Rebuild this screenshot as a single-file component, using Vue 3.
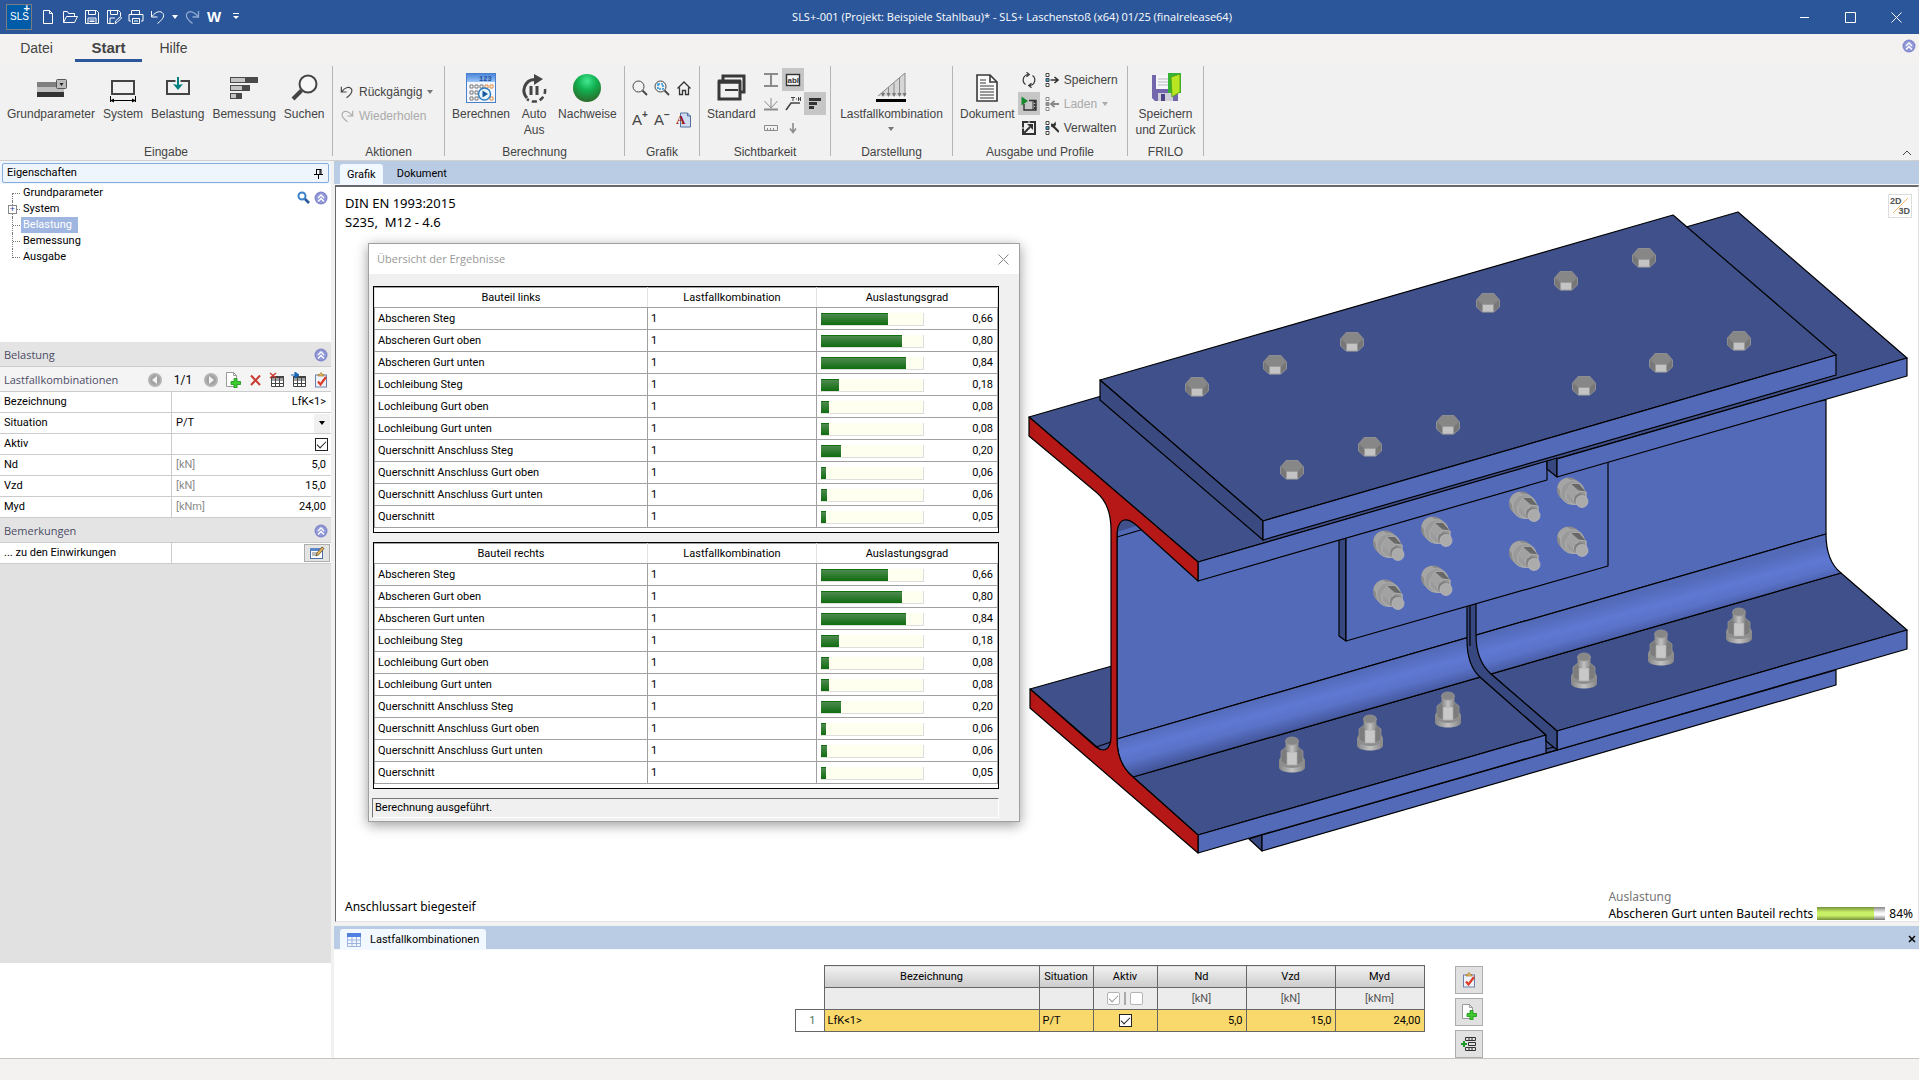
<script setup>
import { ref } from 'vue'

const quick = ['new', 'open', 'save', 'saveas', 'print', 'undo']
const tree = ['Grundparameter', 'System', 'Belastung', 'Bemessung', 'Ausgabe']

const results = [
  ['Abscheren Steg', '0,66', 67],
  ['Abscheren Gurt oben', '0,80', 81],
  ['Abscheren Gurt unten', '0,84', 85],
  ['Lochleibung Steg', '0,18', 18],
  ['Lochleibung Gurt oben', '0,08', 8],
  ['Lochleibung Gurt unten', '0,08', 8],
  ['Querschnitt Anschluss Steg', '0,20', 20],
  ['Querschnitt Anschluss Gurt oben', '0,06', 5],
  ['Querschnitt Anschluss Gurt unten', '0,06', 6],
  ['Querschnitt', '0,05', 5]
]
const parts = ['Bauteil links', 'Bauteil rechts']

const name = ref('LfK<1>')
const situation = ref('P/T')
const active = ref(true)
const loads = ref([
  { id: 'nd', label: 'Nd', unit: '[kN]', value: '5,0' },
  { id: 'vzd', label: 'Vzd', unit: '[kN]', value: '15,0' },
  { id: 'myd', label: 'Myd', unit: '[kNm]', value: '24,00' }
])

const headBolts = [
  [1197, 387], [1275, 365], [1352, 342], [1488, 303], [1566, 281], [1644, 258],
  [1292, 470], [1370, 447], [1448, 425], [1584, 386], [1661, 363], [1739, 341]
]
const webBolts = [
  [1389, 546], [1437, 532], [1525, 507], [1573, 493],
  [1389, 595], [1437, 581], [1525, 556], [1573, 542]
]
const footBolts = [
  [1292, 755], [1370, 733], [1448, 710], [1584, 671], [1661, 648], [1739, 626]
]
</script>

<template>
  <div class="app">
    <svg class="defs" aria-hidden="true">
      <defs>
        <linearGradient id="fillet" gradientUnits="userSpaceOnUse" x1="1300" y1="686" x2="1311" y2="726">
          <stop offset="0" stop-color="#536ab8" />
          <stop offset=".4" stop-color="#5f78d2" />
          <stop offset=".65" stop-color="#5a72c8" />
          <stop offset="1" stop-color="#43569a" />
        </linearGradient>
        <linearGradient id="cyl" x1="0" x2="1">
          <stop offset="0" stop-color="#858585" />
          <stop offset=".5" stop-color="#c2c2c2" />
          <stop offset="1" stop-color="#858585" />
        </linearGradient>
        <radialGradient id="ball" cx=".5" cy=".25" r=".75">
          <stop offset="0" stop-color="#41e892" />
          <stop offset=".45" stop-color="#12b050" />
          <stop offset="1" stop-color="#2c6a2a" />
        </radialGradient>
        <linearGradient id="calc" x1="0" y1="0" x2="0" y2="1">
          <stop offset="0" stop-color="#4c86dc" />
          <stop offset="1" stop-color="#9cc4f6" />
        </linearGradient>
        <symbol id="collapse" viewBox="0 0 14 14">
          <circle cx="7" cy="7" r="6.500" fill="#8389cc" />
          <circle cx="7" cy="7" r="5" fill="#939bd8" />
          <path d="M4 7l3-3 3 3M4 10.500l3-3 3 3" fill="none" stroke="#fff" stroke-width="1.300" />
        </symbol>
        <symbol id="clip" viewBox="0 0 16 16">
          <rect x="2.500" y="3" width="11" height="12" fill="#eef2fb" stroke="#6f80a8" />
          <path d="M5 4V2.500h1.500L8 .5l1.500 2H11V4z" fill="#e3b765" stroke="#a5762c" stroke-width=".7" />
          <path d="M5 9.500l2.500 3L13 5" fill="none" stroke="#dd3b24" stroke-width="2.200" />
        </symbol>
        <symbol id="adddoc" viewBox="0 0 16 16">
          <path d="M1.500.5h7l3 3v11h-10z" fill="#fff" stroke="#9a9a9a" />
          <path d="M8.500.5v3h3" fill="none" stroke="#9a9a9a" />
          <path d="M9 6.500h3v3h3.500v3H12V16H9v-3.500H6v-3h3z" fill="#3ecb2f" stroke="#1b8f16" stroke-width=".8" />
        </symbol>
        <symbol id="undo" viewBox="0 0 16 16">
          <path d="M1.500 2v6h6M2 7.500C6 2 11 1.500 13 4.500s-1 6.500-5.500 10" fill="none" stroke="currentColor" stroke-width="1.300" />
        </symbol>
        <symbol id="redo" viewBox="0 0 16 16">
          <path d="M14.500 2v6h-6M14 7.500C10 2 5 1.500 3 4.500s1 6.500 5.500 10" fill="none" stroke="currentColor" stroke-width="1.300" />
        </symbol>
        <symbol id="hexhead" viewBox="-12 -10 24 20">
          <path d="M-11.500-3L-6-9.500H6L11.500-3V4L6 9H-6L-11.500 4z" fill="#777" stroke="#999" stroke-width=".8" />
          <path d="M-11-3L-6-9H6L11-3 6 1.500H-6z" fill="#878787" />
          <path d="M-5.500 1.500h11V9h-11z" fill="#c4c4c4" stroke="#999" stroke-width=".8" />
        </symbol>
        <symbol id="nutweb" viewBox="-16 -16 32 32">
          <circle cx="-4" cy="-3.500" r="12" fill="#8b8b8b" />
          <path d="M-15.500-6A12 12 0 0 1 -6-15.300L-2-12.500A12 12 0 0 0 -12-1z" fill="#a4a4a4" />
          <circle cx="-.5" cy="-.5" r="12" fill="#9a9a9a" stroke="#b5b5b5" stroke-width=".7" />
          <path d="M-7-1L-2-9 6-9 13-1V7L7 12-1 11-7 6z" fill="#9b9b9b" stroke="#b8b8b8" stroke-width=".8" />
          <path d="M-2-9L6-9 13-1 6-2z" fill="#686868" />
          <path d="M-7-1L-2-9 6-2 0 6z" fill="#a2a2a2" />
          <path d="M6-2l7 1v8l-6 5-7-6z" fill="#959595" stroke="#b8b8b8" stroke-width=".8" />
          <circle cx="7" cy="6.500" r="6" fill="#808080" />
          <circle cx="9" cy="8.500" r="6" fill="#ababab" stroke="#bdbdbd" stroke-width=".7" />
        </symbol>
        <symbol id="nutfoot" viewBox="-14 -19 28 38">
          <path d="M-13 5h26v8c-2 6-24 6-26 0z" fill="url(#cyl)" />
          <ellipse cx="0" cy="6" rx="13" ry="7" fill="#8d8d8d" />
          <path d="M-11-4l5-4H6l5 4V7L5 10H-5l-6-3z" fill="#7c7c7c" stroke="#999" stroke-width=".7" />
          <path d="M-5-3H5V10H-5z" fill="#c8c8c8" stroke="#aaa" stroke-width=".7" />
          <path d="M-6.500-14h13v9c-3 3-10 3-13 0z" fill="url(#cyl)" />
          <ellipse cx="0" cy="-14" rx="6.500" ry="4" fill="#878787" stroke="#9a9a9a" stroke-width=".7" />
        </symbol>
        <symbol id="list" viewBox="0 0 14 14">
          <path d="M1 .5h3v3H1zM1 10.500h3v3H1z" fill="#fff" stroke="currentColor" />
          <path d="M1 5.500h3v3H1z" fill="#38a5e0" stroke="currentColor" />
        </symbol>
      </defs>
    </svg>

    <header class="titlebar">
      <span class="logo"><b>SLS</b><i>+</i></span>
      <nav class="quick">
        <button v-for="q in quick" :key="q" :aria-label="q">
          <svg viewBox="0 0 16 16" width="16" height="16" fill="none" stroke="#fff">
            <path v-if="q === 'new'" d="M3.500 1.500h6l3 3v10h-9zM9.500 1.500v3h3" />
            <path v-else-if="q === 'open'" d="M1.500 13.500v-11h4l1 2h6v3M1.500 13.500l3-6h11l-3 6z" />
            <path v-else-if="q === 'save'" d="M1.500 1.500h11l2 2v11h-13zM4.500 1.500v4h7v-4M4 14v-5h8v5M5.500 11h5M5.500 12.500h5" />
            <path v-else-if="q === 'saveas'" d="M8 14.500H1.500v-13h11l2 2V7M4.500 1.500v4h7v-4M4 14V9h5M9 14.500l1-3 4.500-4 1 1.500-4.500 4.500z" />
            <path v-else-if="q === 'print'" d="M3.500 5.500v-4h8v4M3 12H1V5.500h14V12h-2M4.500 9.500h7v5h-7zM6 12h4" />
            <path v-else d="M1.500 2v6h6M2 7.500C6 2 11 1.500 13 4.500s-1 6.500-5.500 10" />
          </svg>
        </button>
        <button class="slim" aria-label="Liste"><svg viewBox="0 0 6 4" width="6" height="4"><path d="M0 0h6L3 4z" fill="#fff" /></svg></button>
        <button class="faded" aria-label="Wiederholen"><svg width="16" height="16"><use href="#redo" /></svg></button>
        <button class="word" aria-label="Word">W</button>
        <button aria-label="Anpassen"><svg viewBox="0 0 8 8" width="8" height="8"><path d="M1 .5h6" stroke="#fff" /><path d="M1 3h6L4 6z" fill="#fff" /></svg></button>
      </nav>
      <h1>SLS+-001 (Projekt: Beispiele Stahlbau)* - SLS+ Laschenstoß (x64) 01/25 (finalrelease64)</h1>
      <div class="winbtns">
        <button aria-label="Minimieren"><svg viewBox="0 0 11 11" width="11" height="11"><path d="M1 5.500h9" stroke="#fff" /></svg></button>
        <button aria-label="Maximieren"><svg viewBox="0 0 11 11" width="11" height="11"><path d="M.5.5h10v10H.5z" stroke="#fff" fill="none" /></svg></button>
        <button aria-label="Schließen"><svg viewBox="0 0 11 11" width="11" height="11"><path d="M.5.5l10 10M10.500.5l-10 10" stroke="#fff" /></svg></button>
      </div>
    </header>

    <nav class="menutabs">
      <button>Datei</button>
      <button class="on">Start</button>
      <button>Hilfe</button>
      <svg class="help" width="14" height="14"><use href="#collapse" /></svg>
    </nav>

    <section class="ribbon">
      <div class="group g1">
        <div class="items">
          <button class="big">
            <svg viewBox="0 0 32 32" width="32" height="32"><path d="M2 10h27v5H2z" fill="#808080" /><path d="M2 15h27v5H2z" fill="#bfbfbf" /><path d="M2 20h27v5H2z" fill="#333" /><rect x="21.500" y="7.500" width="10" height="9" rx="1" fill="#bbb" stroke="#555" /><path d="M24.500 11h4l-2 3z" fill="#222" /></svg>
            Grundparameter
          </button>
          <button class="big">
            <svg viewBox="0 0 32 32" width="32" height="32"><path d="M5 9h22v13H5z" fill="#f1f1f1" stroke="#444" stroke-width="2" /><path d="M3.500 24v6M28.500 24v6M4 28.500h24" stroke="#000" fill="none" /><path d="M3 28.500l4-2v4zM29 28.500l-4-2v4z" /></svg>
            System
          </button>
          <button class="big">
            <svg viewBox="0 0 32 32" width="32" height="32"><path d="M5 9h22v13H5z" fill="#f1f1f1" stroke="#444" stroke-width="2" /><path d="M16 4v10" stroke="#f1f1f1" stroke-width="5" /><path d="M16 5v11" stroke="#008080" stroke-width="2" /><path d="M11 12l5 1 5-1-5 6z" fill="#008080" /></svg>
            Belastung
          </button>
          <button class="big">
            <svg viewBox="0 0 32 32" width="32" height="32"><path d="M2 5h28v6H2zM2 13h20v6H2zM2 21h12v6H2z" fill="#4a4a4a" /><path d="M3 6h14v4H3zM3 14h11v4H3zM3 22h5v4H3z" fill="#c4c4c4" /></svg>
            Bemessung
          </button>
          <button class="big">
            <svg viewBox="0 0 32 32" width="32" height="32"><circle cx="20" cy="12" r="8.500" fill="#f7f7f7" stroke="#444" stroke-width="2" /><path d="M13.500 18.500L5 27" stroke="#444" stroke-width="4" /></svg>
            Suchen
          </button>
        </div>
        <h2>Eingabe</h2>
      </div>
      <div class="group g2">
        <div class="items stack">
          <button class="row"><svg width="14" height="14"><use href="#undo" /></svg>Rückgängig <svg class="tri" viewBox="0 0 6 4" width="6" height="4"><path d="M0 0h6L3 4z" fill="#777" /></svg></button>
          <button class="row" disabled><svg width="14" height="14"><use href="#redo" /></svg>Wiederholen</button>
        </div>
        <h2>Aktionen</h2>
      </div>
      <div class="group g3">
        <div class="items">
          <button class="big">
            <svg viewBox="0 0 32 32" width="32" height="32"><rect x="1.500" y="1.500" width="29" height="29" fill="#f3f7fd" stroke="#4a7fcb" /><path d="M2 2h28v8H2z" fill="url(#calc)" /><g font-size="7" font-weight="bold" fill="#234d94" font-family="Liberation Mono"><text x="14" y="8.500">123</text></g><path d="M5 13h3v3H5zM10 13h3v3h-3zM15 13h3v3h-3zM5 19h3v3H5zM10 19h3v3h-3zM5 25h3v3H5zM10 25h3v3h-3z" fill="#fff" stroke="#777" /><path d="M20 13h3v3h-3zM25 13h3v3h-3zM25 25h3v3h-3z" fill="#fff" stroke="#e08a3c" /><circle cx="19.500" cy="22" r="6" fill="#e9f4fd" stroke="#2f7fc4" stroke-width="1.500" /><path d="M17.500 18.500v7l5.500-3.500z" fill="#15599f" /></svg>
            Berechnen
          </button>
          <button class="big">
            <svg viewBox="0 0 32 32" width="32" height="32" fill="none" stroke="#444"><path d="M9 26A11 11 0 0 1 16 7.500" stroke-width="3" /><path d="M16 2l9 5-9 6z" fill="#444" stroke="none" /><path d="M13 14v9M19 14v9" stroke-width="3" /><path d="M27 17a11 11 0 0 1-18 10" stroke-width="2.500" stroke-dasharray="5 3" /></svg>
            Auto<br>Aus
          </button>
          <button class="big">
            <svg viewBox="0 0 32 32" width="32" height="32"><circle cx="16" cy="16" r="14" fill="url(#ball)" /></svg>
            Nachweise
          </button>
        </div>
        <h2>Berechnung</h2>
      </div>
      <div class="group g4">
        <div class="items grid">
          <button aria-label="Lupe"><svg viewBox="0 0 16 16" width="16" height="16" fill="none" stroke="#444"><circle cx="6.500" cy="6.500" r="5.500" /><path d="M10.500 10.500l4.500 4.500" stroke-width="1.800" /></svg></button>
          <button aria-label="Zoom Fenster"><svg viewBox="0 0 16 16" width="16" height="16" fill="none" stroke="#444"><circle cx="6.500" cy="6.500" r="5.500" /><path d="M10.500 10.500l4.500 4.500" stroke-width="1.800" /><path d="M4 4h5v5H4z" stroke="#2b96d8" stroke-width="1.600" stroke-dasharray="2 1" /></svg></button>
          <button aria-label="Alles"><svg viewBox="0 0 16 16" width="16" height="16" fill="none" stroke="#333" stroke-width="1.300"><path d="M1.500 8.500L8 2l6.500 6.500M3.500 7.500v7h3v-4h3v4h3v-7" /></svg></button>
          <button class="letter">A<sup>+</sup></button>
          <button class="letter">A<sup>−</sup></button>
          <button aria-label="Schrift"><svg viewBox="0 0 16 16" width="16" height="16"><path d="M4.500 1h7l3 3v11h-10z" fill="#cfdcf0" stroke="#54709e" /><path d="M11.500 1v3h3" fill="#9db6da" stroke="#54709e" /><text x="0" y="12" font-size="13" font-weight="bold" fill="#a01010" font-family="Liberation Serif">A</text></svg></button>
        </div>
        <h2>Grafik</h2>
      </div>
      <div class="group g5">
        <div class="items">
          <button class="big">
            <svg viewBox="0 0 32 32" width="32" height="32" fill="none" stroke="#383838"><path d="M8 4h21v16H8z" stroke-width="3" /><path d="M4 10h21v17H4z" fill="#f1f1f1" stroke-width="3" /><path d="M10 18h13" stroke-width="2" /><path d="M3 9.500h23" stroke-width="4" /></svg>
            Standard
          </button>
          <div class="minis">
            <button aria-label="Profil"><svg viewBox="0 0 16 16" width="16" height="16" fill="none" stroke="#8b8b8b" stroke-width="2"><path d="M1 2h14M1 14h14M8 2v12" /></svg></button>
            <button class="sel" aria-label="Text"><svg viewBox="0 0 16 16" width="16" height="16"><rect x="1.500" y="2.500" width="13" height="11" fill="#f4f4f4" stroke="#333" stroke-width="1.400" /><text x="2.500" y="11" font-size="8" font-weight="bold" fill="#333" font-family="Liberation Sans">abl</text></svg></button>
            <i></i>
            <button aria-label="Knoten"><svg viewBox="0 0 16 16" width="16" height="16" fill="none" stroke="#8b8b8b"><path d="M1 13.500h14" stroke-width="2" /><path d="M8 2v10M8 12L1.500 5M8 12l6.500-7" /></svg></button>
            <button aria-label="Beschriftung"><svg viewBox="0 0 16 16" width="16" height="16" fill="none" stroke="#444"><path d="M1 14l5-7h9" stroke-width="1.600" /><path d="M6 1.500h4M8 1.500V5M11 3h1M13.500 1v4M15.500 1v4M13.500 3h2" /></svg></button>
            <button class="sel" aria-label="Ergebnisse"><svg viewBox="0 0 16 16" width="16" height="16" fill="#333"><path d="M2 2h12v3H2zM2 6h8v3H2zM2 10h5v3H2z" /></svg></button>
            <button aria-label="Maß"><svg viewBox="0 0 16 16" width="16" height="16" fill="none" stroke="#8b8b8b"><path d="M1.500 5.500h13v5h-13zM4.500 10V8M7.500 10V8M10.500 10V8" /></svg></button>
            <button aria-label="Lasten"><svg viewBox="0 0 16 16" width="16" height="16" fill="none" stroke="#8b8b8b" stroke-width="1.600"><path d="M8 3v9M5 8.500l3 4 3-4" /></svg></button>
            <i></i>
          </div>
        </div>
        <h2>Sichtbarkeit</h2>
      </div>
      <div class="group g6">
        <div class="items">
          <button class="big">
            <svg viewBox="0 0 32 32" width="32" height="32"><path d="M3 24L30 1v23z" fill="#d6d6d6" /><path d="M3 24L30 1v23M24.500 6v18M19 11v13M13.500 15v9M8 20v4" fill="none" stroke="#8a8a8a" /><path d="M6 21h4l-2 4zM11.500 21h4l-2 4zM17 21h4l-2 4zM22.500 21h4l-2 4zM27.500 21h4l-2 4z" fill="#777" /><path d="M1 27h30v3H1z" /></svg>
            Lastfallkombination
            <svg class="tri" viewBox="0 0 6 4" width="6" height="4"><path d="M0 0h6L3 4z" fill="#777" /></svg>
          </button>
        </div>
        <h2>Darstellung</h2>
      </div>
      <div class="group g7">
        <div class="items">
          <button class="big">
            <svg viewBox="0 0 32 32" width="32" height="32" fill="none" stroke="#383838"><path d="M6 3h13l7 7v19H6z" fill="#fafafa" stroke-width="1.600" /><path d="M19 3v7h7" stroke-width="1.600" /><path d="M9 8h6M9 11h6M9 14h14M9 17h14M9 20h14M9 23h14M9 26h14" /></svg>
            Dokument
          </button>
          <div class="minicol">
            <button aria-label="Aktualisieren"><svg viewBox="0 0 16 16" width="16" height="16" fill="none" stroke="#333" stroke-width="1.200"><path d="M7 2.500C1.500 3.500.8 10 4.500 12.500M9 13.500C14.500 12.500 15.200 6 11.500 3.500" /><path d="M5.500.3l2.800 2.200L5.500 4.700M10.500 11.300l-2.800 2.200 2.800 2.200" /></svg></button>
            <button class="sel" aria-label="Film"><svg viewBox="0 0 16 16" width="16" height="16"><path d="M3 8v6h12V4.500H8" fill="none" stroke="#333" stroke-width="1.400" /><path d="M12 5v9" stroke="#333" /><path d="M14 5v9" stroke="#333" stroke-dasharray="2 1" stroke-width="2" /><path d="M.5.500v9l6.500-4.500z" fill="#168a2c" /></svg></button>
            <button aria-label="Extern"><svg viewBox="0 0 16 16" width="16" height="16"><path d="M1 1h14v14H1z" fill="#333" /><path d="M3 3h10v10H3z" fill="#f1f1f1" /><path d="M8 1v3M1 8h3" stroke="#f1f1f1" stroke-width="1" /><path d="M3 13l6-6" stroke="#333" stroke-width="2" /><path d="M6 4h6v6z" fill="#333" /></svg></button>
          </div>
          <div class="minicol wide">
            <button class="row"><svg viewBox="0 0 14 14" width="14" height="14"><use href="#list" /><path d="M5.500 7H12M9.500 4l3.500 3-3.500 3" fill="none" stroke="#333" stroke-width="1.600" /></svg>Speichern</button>
            <button class="row" disabled><svg class="dim" viewBox="0 0 14 14" width="14" height="14"><use href="#list" /><path d="M6 7h8M9.500 4L6 7l3.500 3" fill="none" stroke="#888" stroke-width="1.800" /></svg>Laden <svg class="tri" viewBox="0 0 6 4" width="6" height="4"><path d="M0 0h6L3 4z" fill="#aaa" /></svg></button>
            <button class="row"><svg viewBox="0 0 14 14" width="14" height="14"><use href="#list" /><path d="M8 5l6 6" stroke="#333" stroke-width="2.200" /><path d="M6 2.500l2.500.5 2-2.500.5 3L9 7 6 5.500z" fill="#333" /></svg>Verwalten</button>
          </div>
        </div>
        <h2>Ausgabe und Profile</h2>
      </div>
      <div class="group g8">
        <div class="items">
          <button class="big">
            <svg viewBox="0 0 32 32" width="32" height="32"><path d="M2 3h26v26H5l-3-3z" fill="#7466ad" /><path d="M6 3h15v14H6z" fill="#f6f6f8" /><path d="M8 7h11M8 10h11M8 13h11" stroke="#b9b9c5" /><path d="M8 21h15v8H8z" fill="#cfcfd8" /><path d="M11 22h4v7h-4z" fill="#4f4488" /><path d="M18 1h13v20H18z" fill="#35b335" /><path d="M21 5l9-3v18l-8 5z" fill="#b8e620" stroke="#58a51c" /></svg>
            Speichern<br>und Zurück
          </button>
        </div>
        <h2>FRILO</h2>
      </div>
      <button class="fold" aria-label="Menüband reduzieren"><svg viewBox="0 0 10 6" width="10" height="6"><path d="M1 5l4-4 4 4" fill="none" stroke="#444" /></svg></button>
    </section>

    <main>
      <aside>
        <div class="sidehead"><div>Eigenschaften<svg viewBox="0 0 9 11" width="9" height="11"><path d="M2 1.500h5M2.500 1v5M6 1v5M7 1v5M0 6.500h9M4.500 7v4" stroke="#000" fill="none" /></svg></div></div>
        <div class="tree">
          <ul>
            <li v-for="(t, i) in tree" :key="t" :class="{ first: i === 0, last: i === 4 }">
              <span v-if="i === 1" class="plus">+</span>
              <a href="#" :class="{ on: i === 2 }">{{ t }}</a>
            </li>
          </ul>
          <div class="treetools">
            <svg viewBox="0 0 13 13" width="13" height="13" fill="none"><circle cx="5" cy="5" r="3.500" stroke="#3a82cc" stroke-width="2" /><path d="M8 8l4 4" stroke="#26569a" stroke-width="2.500" /></svg>
            <svg width="14" height="14"><use href="#collapse" /></svg>
          </div>
        </div>
        <h3>Belastung<svg width="14" height="14"><use href="#collapse" /></svg></h3>
        <div class="lfk">
          <span class="cap">Lastfallkombinationen</span>
          <button aria-label="Zurück"><svg viewBox="0 0 16 16" width="16" height="16"><circle cx="8" cy="8" r="7" fill="#b3b3b3" /><circle cx="8" cy="8" r="5" fill="#a3a3a3" /><path d="M10 4v8L5 8z" fill="#f4f4f4" /></svg></button>
          <span class="count">1/1</span>
          <button aria-label="Weiter"><svg viewBox="0 0 16 16" width="16" height="16"><circle cx="8" cy="8" r="7" fill="#b3b3b3" /><circle cx="8" cy="8" r="5" fill="#a3a3a3" /><path d="M6 4v8l5-4z" fill="#f4f4f4" /></svg></button>
          <button aria-label="Neu"><svg width="16" height="16"><use href="#adddoc" /></svg></button>
          <button aria-label="Löschen"><svg viewBox="0 0 16 16" width="16" height="16"><path d="M4 3.500l9 9.500M13 3.500L4 13" stroke="#c93a31" stroke-width="2" /></svg></button>
          <button aria-label="Zeile löschen"><svg viewBox="0 0 16 16" width="16" height="16"><path d="M2.500 4.500h12v10h-12zM2 8h13M2 11.500h13M6.500 5v10M10.500 5v10" fill="#fff" stroke="#444" /><path d="M2 4h13v2.500H2z" fill="#444" /><path d="M1 1l6 5M7 1L1 6" stroke="#d0392e" stroke-width="1.500" /></svg></button>
          <button aria-label="Einfügen"><svg viewBox="0 0 16 16" width="16" height="16"><path d="M2.500 4.500h12v10h-12zM2 8h13M2 11.500h13M6.500 5v10M10.500 5v10" fill="#fff" stroke="#444" /><path d="M2 4h13v2.500H2z" fill="#444" /><path d="M0 3h5M4 0l4 3-4 3z" fill="#1466b8" stroke="#1466b8" /></svg></button>
          <button aria-label="Prüfen"><svg width="16" height="16"><use href="#clip" /></svg></button>
        </div>
        <div class="prop"><label for="bez">Bezeichnung</label><div><input id="bez" v-model="name" type="text"></div></div>
        <div class="prop"><label for="sit">Situation</label><div><select id="sit" v-model="situation"><option>P/T</option></select><span class="drop"><svg viewBox="0 0 6 4" width="6" height="4"><path d="M0 0h6L3 4z" /></svg></span></div></div>
        <div class="prop"><label for="akt">Aktiv</label><div class="end"><input id="akt" v-model="active" class="chk" type="checkbox"></div></div>
        <div v-for="l in loads" :key="l.id" class="prop"><label :for="l.id">{{ l.label }}</label><div><span class="unit">{{ l.unit }}</span><input :id="l.id" v-model="l.value" type="text"></div></div>
        <h3>Bemerkungen<svg width="14" height="14"><use href="#collapse" /></svg></h3>
        <div class="prop"><span class="lab">... zu den Einwirkungen</span><div class="end"><button class="edit" aria-label="Bearbeiten"><svg viewBox="0 0 16 14" width="16" height="14"><rect x="1.500" y="2.500" width="12" height="10" fill="#fff" stroke="#4c6fa8" /><path d="M1 2h13v3H1z" fill="#5b86c8" /><path d="M3 7h6M3 9h4" stroke="#777" /><path d="M7 10l1-3 5-6 2 1.500-5 6z" fill="#e9b95a" stroke="#5b4a2c" stroke-width=".8" /></svg></button></div></div>
        <div class="filler"></div>
      </aside>

      <div class="work">
        <nav class="doctabs"><button class="on">Grafik</button><button>Dokument</button></nav>
        <div class="canvas">
          <svg class="model" viewBox="336 187 1582 734" stroke="#000" stroke-width="1.200" stroke-linejoin="round">
            <!-- lower cover plate -->
            <path d="M1249 839L1262 835V851z" fill="#37477f" />
            <path d="M1540 745L1562 730V752L1540 758z" fill="#3f508a" stroke="none" />
            <path d="M1262 835L1836 670V685L1262 851z" fill="#536ab8" />
            <!-- lower flange -->
            <path d="M1030 689L1112 666V760z" fill="#3f508a" />
            <path d="M1133 777L1841 573 1907 630 1557 731 1491 674 1480 677 1546 735 1198 835z" fill="#3f508a" />
            <path d="M1198 835L1546 735V753L1198 853z" fill="#536ab8" />
            <path d="M1557 731L1907 630V649L1557 750z" fill="#536ab8" />
            <path d="M1546 753L1557 750M1546 749L1554 747" />
            <!-- web and fillet -->
            <path d="M1117 530L1826 400V534L1117 739z" fill="#536ab8" />
            <path d="M1117 739L1826 534C1826 552 1831 565 1841 573L1133 777C1122 768 1117 755 1117 739z" fill="url(#fillet)" />
            <path d="M1467 600H1476V635C1476 655 1482 666 1491 674L1557 731V750L1546 741V735L1480 677C1470 668 1467 655 1467 640z" fill="#37477f" />
            <path d="M1470 602V646" />
            <!-- web splice plate -->
            <path d="M1339 530L1346 530V641L1339 636z" fill="#37477f" />
            <path d="M1346 520L1608 440V566L1346 641z" fill="#536ab8" />
            <!-- upper flange -->
            <path d="M1117 537L1198 513V562L1140 525C1130 517 1120 515 1117 530z" fill="#536ab8" />
            <path d="M1117 530Q1124 512 1142 524L1117 532z" fill="#3f508a" stroke="none" />
            <path d="M1029 417L1738 212 1907 358 1198 562z" fill="#3f508a" />
            <path d="M1198 562L1547 461V480L1198 581z" fill="#536ab8" />
            <path d="M1547 461L1557 458V477L1547 469z" fill="#37477f" />
            <path d="M1557 459L1907 358V376L1557 477z" fill="#536ab8" />
            <!-- upper cover plate -->
            <path d="M1100 380L1673 215 1836 355 1263 521z" fill="#3f508a" />
            <path d="M1100 380L1263 521V540L1100 400z" fill="#3a4a80" />
            <path d="M1263 521L1836 355V375L1263 540z" fill="#536ab8" />
            <!-- cut face of the profile -->
            <path fill="#b61717" d="M1029 417L1198 562V581L1135 524C1123 515 1117 522 1117 536V739C1117 755 1122 768 1133 777L1198 835V853L1030 708V689L1096 747C1104 753 1111 750 1111 736V530C1111 512 1106 500 1096 492L1029 436z" />
            <path d="M1096 747L1111 742" />
            <g stroke="none">
              <use v-for="b in headBolts" :key="b.join()" href="#hexhead" :x="b[0] - 12" :y="b[1] - 10" width="24" height="20" />
              <use v-for="b in webBolts" :key="b.join()" href="#nutweb" :x="b[0] - 16" :y="b[1] - 16" width="32" height="32" />
              <use v-for="b in footBolts" :key="b.join()" href="#nutfoot" :x="b[0] - 14" :y="b[1] - 19" width="28" height="38" />
            </g>
          </svg>
          <p class="spec">DIN EN 1993:2015<br>S235,&nbsp; M12 - 4.6</p>
          <p class="kind">Anschlussart biegesteif</p>
          <button class="dim23"><svg viewBox="0 0 24 24" width="24" height="24"><path d="M5 19L20 4" stroke="#f3b461" /></svg><b>2D</b><b>3D</b></button>
          <div class="util">
            <p>Auslastung</p>
            <div>Abscheren Gurt unten Bauteil rechts<span class="ubar"><span :style="{ width: '84%' }"></span></span>84%</div>
          </div>

          <section class="dialog">
            <header>Übersicht der Ergebnisse<button aria-label="Schließen"><svg viewBox="0 0 11 11" width="11" height="11"><path d="M.5.5l10 10M10.500.5l-10 10" stroke="#888" /></svg></button></header>
            <div class="dbody">
              <div v-for="p in parts" :key="p" class="tbox">
                <table>
                  <colgroup><col class="c1"><col class="c2"><col></colgroup>
                  <thead><tr><th>{{ p }}</th><th>Lastfallkombination</th><th>Auslastungsgrad</th></tr></thead>
                  <tbody>
                    <tr v-for="r in results" :key="r[0]">
                      <td>{{ r[0] }}</td><td>1</td>
                      <td><div class="deg"><span class="bar"><span :style="{ width: r[2] + 'px' }"></span></span>{{ r[1] }}</div></td>
                    </tr>
                  </tbody>
                </table>
              </div>
              <div class="msg">Berechnung ausgeführt.</div>
            </div>
          </section>
        </div>

        <section class="lower">
          <nav class="doctabs">
            <button class="on"><svg viewBox="0 0 14 14" width="14" height="14"><path d="M.5.5h13v13H.5zM0 7h14M0 10.500h14M5 4v10M9.500 4v10" fill="#f2f7ff" stroke="#9db4de" /><path d="M0 0h14v4H0z" fill="#4f7fe0" /></svg>Lastfallkombinationen</button>
            <button class="x" aria-label="Schließen"><svg viewBox="0 0 8 8" width="8" height="8"><path d="M1 1l6 6M7 1L1 7" stroke="#000" stroke-width="1.500" /></svg></button>
          </nav>
          <div class="lbody">
            <table>
              <colgroup><col class="k0"><col class="k1"><col class="k2"><col class="k3"><col class="k4"><col class="k4"><col class="k4"></colgroup>
              <thead>
                <tr class="h"><td class="none"></td><th>Bezeichnung</th><th>Situation</th><th>Aktiv</th><th>Nd</th><th>Vzd</th><th>Myd</th></tr>
                <tr class="u"><td class="none"></td><td></td><td></td><td><div class="both"><input class="chk soft" type="checkbox" checked aria-label="Alle"><i></i><input class="chk soft" type="checkbox" aria-label="Keine"></div></td><td>[kN]</td><td>[kN]</td><td>[kNm]</td></tr>
              </thead>
              <tbody>
                <tr class="d"><th>1</th><td>LfK&lt;1&gt;</td><td>P/T</td><td class="mid"><input v-model="active" class="chk" type="checkbox" aria-label="Aktiv"></td><td>5,0</td><td>15,0</td><td>24,00</td></tr>
              </tbody>
            </table>
            <div class="lbtns">
              <button aria-label="Prüfen"><svg width="16" height="16"><use href="#clip" /></svg></button>
              <button aria-label="Neu"><svg width="16" height="16"><use href="#adddoc" /></svg></button>
              <button aria-label="Zeile einfügen"><svg viewBox="0 0 16 16" width="16" height="16" fill="none" stroke="#333"><path d="M4.500 1.500h10v3h-10zM8 1v3M11 1v3M4.500 11.500h10v3h-10zM8 11v3M11 11v3M7.500 6.500h7v3h-7z" /><path d="M0 8h6M3 5v6" stroke="#1c9a2a" stroke-width="2" /></svg></button>
            </div>
          </div>
        </section>
      </div>
    </main>
    <footer></footer>
  </div>
</template>

<style>
body { margin: 0; }
</style>

<style scoped>
.app { height: 100vh; display: flex; flex-direction: column; overflow: hidden; background: #f1f1f1; color: #000; font: 11px/16px Roboto, sans-serif; }
.app *, .app *::before { box-sizing: border-box; }
.defs { position: absolute; width: 0; height: 0; }
button { border: 0; background: none; padding: 0; margin: 0; font: inherit; color: inherit; display: flex; align-items: center; justify-content: center; }
h1, h2, h3, p, ul { margin: 0; padding: 0; font-weight: normal; }
svg { flex: none; }

.titlebar { height: 34px; background: #2b579a; display: flex; align-items: center; color: #fff; flex: none; }
.logo { position: relative; width: 26px; height: 26px; margin: 0 5px 0 6px; background: #005ca9; border: 1px solid #7c7c7c; font: 10px/24px "Liberation Sans", sans-serif; padding-left: 3px; }
.logo b { font-weight: normal; }
.logo i { position: absolute; right: 1px; top: -3px; font: bold 11px/12px "Liberation Sans", sans-serif; }
.quick { display: flex; }
.quick button { width: 22px; height: 24px; }
.quick .slim { width: 12px; }
.quick .faded { color: #8fa9d0; }
.quick .word { font: bold 15px/16px "Liberation Sans", sans-serif; }
h1 { flex: 1; text-align: center; font: 11px/16px "Open Sans", sans-serif; padding-right: 4px; }
.winbtns { display: flex; }
.winbtns button { width: 46px; height: 34px; }

.menutabs { height: 28px; display: flex; background: #f3f2f1; padding: 0 3px 0 10px; font: 14px/18px "Liberation Sans", sans-serif; color: #444; flex: none; align-items: center; }
.menutabs button { width: 53px; height: 28px; border-bottom: 3px solid transparent; padding-top: 3px; }
.menutabs .on { width: 67px; margin: 0 5px 0 12px; font-weight: bold; font-size: 15px; border-color: #2b579a; }
.help { margin: -4px 0 0 auto; }

.ribbon { height: 99px; display: flex; border-bottom: 1px solid #d2d0ce; padding: 4px 0; background: #f1f1f1; font: 12px/16px "Liberation Sans", sans-serif; color: #444; flex: none; }
.group { border-right: 1px solid #b5b5b5; display: flex; flex-direction: column; justify-content: space-between; }
.group h2 { text-align: center; font-size: 12px; line-height: 8px; }
.items { display: flex; gap: 8px; padding: 0 7px; height: 78px; white-space: nowrap; }
.big { flex-direction: column; justify-content: flex-start; padding-top: 6px; align-self: flex-start; }
.big svg { margin-bottom: 2px; }
.big .tri { margin: 5px 0 0; }
.g1 { width: 333px; } .g2 { width: 112px; } .g3 { width: 180px; } .g4 { width: 75px; }
.g5 { width: 131px; } .g6 { width: 122px; } .g7 { width: 175px; } .g8 { width: 76px; }
.g6 .items, .g8 .items { justify-content: center; }
.stack { flex-direction: column; gap: 8px; padding-top: 18px; }
.row { gap: 5px; justify-content: flex-start; height: 16px; }
.row:disabled { color: #aaa; }
.dim { color: #888; filter: grayscale(1); }
.grid { display: grid; grid-template-columns: 22px 22px 22px; grid-template-rows: 32px 32px; gap: 0; padding: 6px 4px; }
.letter { font-size: 15px; align-items: center; }
.letter sup { font-size: 10px; line-height: 10px; align-self: flex-start; padding-top: 6px; font-weight: bold; }
.minis { display: grid; grid-template-columns: 22px 22px 22px; grid-template-rows: 24px 24px 24px; padding-top: 2px; margin-left: -4px; }
.minis button, .minicol button { height: 23px; }
.sel { background: #c6c6c6; }
.g7 .items { gap: 3px; }
.minicol { display: flex; flex-direction: column; width: 22px; gap: 1px; padding-top: 2px; }
.minicol.wide { width: auto; padding-left: 2px; }
.fold { margin: auto 7px 0 auto; height: 6px; }

main { flex: 1; min-height: 0; display: flex; gap: 3px; }
aside { width: 331px; display: flex; flex-direction: column; background: #fff; padding-bottom: 95px; flex: none; }
.sidehead { height: 23px; background: #eff5fd; padding: 2px 2px 1px; }
.sidehead div { height: 20px; border: 1px solid #84acdd; border-radius: 2px; display: flex; justify-content: space-between; align-items: center; padding: 0 5px 0 4px; }
.tree { height: 158px; display: flex; justify-content: space-between; }
ul { list-style: none; padding-top: 1px; }
li { height: 16px; display: flex; align-items: center; padding-left: 21px; position: relative; }
li::before { content: ""; position: absolute; left: 12px; top: 0; height: 16px; width: 9px; border-left: 1px dotted #777; background: linear-gradient(90deg, #777 50%, transparent 50%) 0 8px / 2px 1px repeat-x; }
li.first::before { top: 8px; height: 8px; background-position: 0 0; }
li.last::before { height: 9px; }
li a { color: #000; text-decoration: none; padding: 0 6px 0 2px; line-height: 16px; }
li a.on { background: #9fb6e0; color: #fff; }
.plus { position: absolute; left: 8px; top: 4px; width: 9px; height: 9px; border: 1px solid #888; background: #fff; font: 9px/7px "Liberation Sans", sans-serif; text-align: center; color: #223a8f; }
.treetools { display: flex; gap: 4px; padding: 7px 3px; }
h3 { height: 25px; background: #e4e4e4; border-bottom: 1px solid #ccc; display: flex; align-items: center; justify-content: space-between; padding: 1px 3px 0 4px; font: 11px/16px "Open Sans", sans-serif; color: #4c4c66; flex: none; }
.lfk { height: 25px; background: #f4f4f4; border-bottom: 1px solid #ccc; display: flex; align-items: center; padding: 1px 2px 0 4px; gap: 6px; flex: none; }
.lfk .cap { flex: 1; font: 11px/16px "Open Sans", sans-serif; color: #4c4c66; }
.lfk .count { width: 28px; text-align: center; font-size: 12px; }
.prop { height: 21px; display: flex; border-bottom: 1px solid #ccc; flex: none; }
.prop label, .lab { width: 172px; border-right: 1px solid #ccc; padding-left: 4px; line-height: 20px; flex: none; }
.prop div { flex: 1; display: flex; align-items: center; min-width: 0; padding-left: 4px; }
.prop div.end { justify-content: flex-end; padding-right: 3px; }
.prop input[type="text"] { flex: 1; min-width: 0; border: 0; padding: 0 5px 0 0; text-align: right; font: inherit; background: none; }
select { appearance: none; border: 0; background: none; font: inherit; flex: 1; padding: 0; color: #000; }
.drop { width: 16px; height: 19px; background: #f0f0f0; display: flex; align-items: center; justify-content: center; margin-right: 1px; }
.unit { color: #8a8a8a; }
.chk { appearance: none; width: 13px; height: 13px; border: 1px solid #222; background: #fff; margin: 0; display: flex; justify-content: center; flex: none; }
.chk:checked::before { content: ""; width: 5px; height: 9px; border: solid #222; border-width: 0 1px 1px 0; transform: rotate(45deg); }
.chk.soft { border-color: #b5b5b5; border-radius: 2px; }
.chk.soft::before { border-color: #999; }
.edit { width: 26px; height: 18px; border: 1px solid #adadad; background: #e4e4e4; margin-right: -2px; }
.filler { flex: 1; background: #e1e1e1; }

.work { flex: 1; min-width: 0; display: flex; flex-direction: column; }
.doctabs { height: 24px; background: #bacce4; border-bottom: 1px solid #f4f8fd; padding: 3px 3px 0 6px; display: flex; flex: none; }
.doctabs button { padding: 0 7px; height: 20px; }
.doctabs .on { background: #f2f8ff; border-radius: 3px 3px 0 0; height: 21px; margin-right: 7px; }
.canvas { flex: 1; min-height: 0; position: relative; background: #fff; border: 1px solid; border-color: #696969 #e3e3e3 #e3e3e3 #696969; margin: 0 0 4px 1px; border-top-width: 2px; }
.model { position: absolute; inset: 0; width: 100%; height: 100%; }
.spec, .kind, .util { position: absolute; font: 12px/19px "Noto Sans", sans-serif; }
.spec { left: 9px; top: 7px; font-size: 13px; }
.kind { left: 9px; bottom: 5px; }
.util { right: 5px; bottom: -1px; line-height: 17px; }
.util p { color: #777; }
.util div { display: flex; align-items: center; }
.ubar { width: 68px; height: 13px; margin: 0 4px; background: linear-gradient(#888, #eee 40%, #fff 60%, #777); }
.ubar span { display: block; height: 13px; background: linear-gradient(#76903c, #c8f066 40%, #c8f066 65%, #76903c); }
.dim23 { position: absolute; right: 6px; top: 7px; width: 24px; height: 24px; border: 1px solid #ddd; font: bold 9px/10px "Liberation Sans", sans-serif; color: #555; display: grid; align-content: space-between; justify-content: stretch; }
.dim23 svg { position: absolute; left: -1px; top: -1px; }
.dim23 b { text-align: left; padding-left: 1px; padding-top: 1px; }
.dim23 b:last-child { text-align: right; padding: 0 1px 1px 0; }

.dialog { position: absolute; left: 32px; top: 56px; width: 652px; border: 1px solid #a0a0a0; background: #f0f0f0; box-shadow: 0 3px 12px rgba(0, 0, 0, .4); }
.dialog header { height: 30px; background: #fff; display: flex; align-items: center; justify-content: space-between; padding: 0 10px 0 8px; font: 11px/16px "Open Sans", sans-serif; color: #999; }
.dbody { padding: 12px 20px 3px 4px; }
.tbox { border: 1px solid #000; background: #fff; padding-bottom: 4px; margin-bottom: 9px; }
table { border-collapse: collapse; table-layout: fixed; width: 100%; }
.c1 { width: 273px; } .c2 { width: 169px; }
.dialog th { font-weight: normal; height: 20px; padding: 1px 0 0; border: 1px solid #e3e3e3; border-top-color: #a0a0a0; border-bottom: 1px solid #a0a0a0; }
.dialog td { height: 22px; padding: 1px 3px 0; border: 1px solid #a0a0a0; line-height: 16px; }
.dialog tbody td:last-child { padding: 1px 4px 0; }
.deg { display: flex; justify-content: space-between; align-items: center; }
.bar { width: 103px; height: 13px; background: #fffff0; border: solid #ddd; border-width: 0 1px 1px 0; }
.bar span { display: block; height: 12px; background: linear-gradient(#4e8a50, #106c10); border-top: 1px solid #107010; }
.msg { height: 20px; border: 1px solid; border-color: #777 #fff #fff #777; line-height: 18px; padding-left: 2px; margin-left: -1px; }

.lower { height: 132px; background: #fff; flex: none; overflow: hidden; }
.lower .on { height: 21px; gap: 9px; }
.lower .x { margin-left: auto; padding: 0; }
.lbody { display: flex; justify-content: center; gap: 30px; padding: 15px 0 0 24px; }
.lbody table { width: 630px; align-self: flex-start; }
.k0 { width: 29px; } .k1 { width: 215px; } .k2 { width: 54px; } .k3 { width: 64px; } .k4 { width: 89px; }
.lbody th, .lbody td { height: 22px; padding: 0 3px; border: 1px solid #666; font-weight: normal; text-align: center; line-height: 16px; }
.lbody td.none { border: 0; background: none; }
.h th { background: linear-gradient(#f2f2f2, #cbcbcb); }
.u td { background: #ececec; color: #555; }
.both { display: flex; justify-content: center; gap: 4px; }
.both i { width: 2px; height: 13px; background: #aaa; }
.d td { background: #fad96c; text-align: right; }
.d td:nth-child(2), .d td:nth-child(3) { text-align: left; }
.d .mid .chk { margin: 0 auto; }
.d th { text-align: right; padding-right: 8px; color: #4d7a5a; background: #fff; }
.lbtns { display: flex; flex-direction: column; gap: 4px; padding-top: 1px; }
.lbtns button { width: 28px; height: 28px; background: #e1e1e1; border: 1px solid #adadad; }
footer { height: 22px; background: #f3f2f1; border-top: 1px solid #c6c4c2; flex: none; }
</style>
